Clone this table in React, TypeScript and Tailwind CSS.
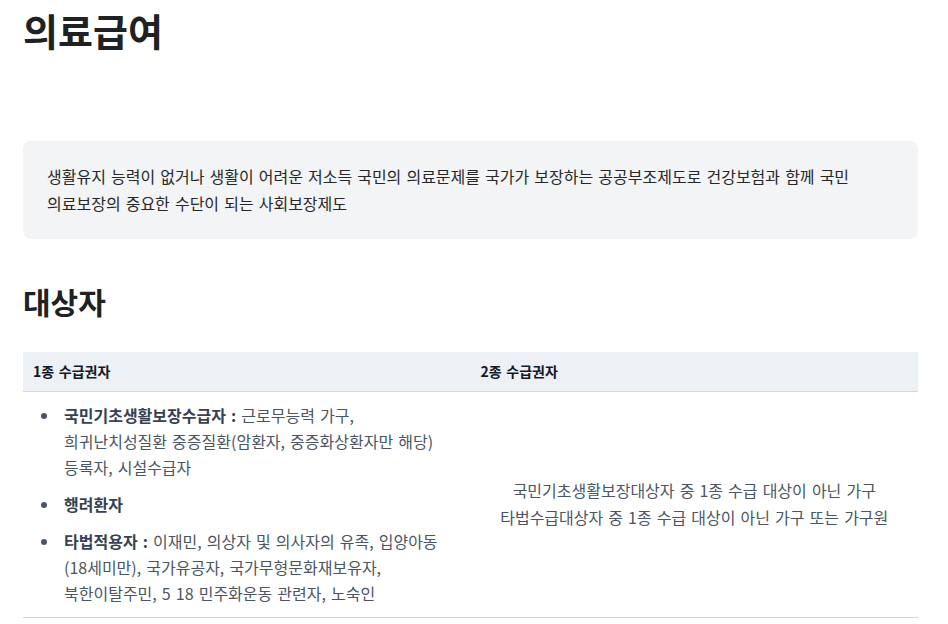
import React from 'react';

const font = { fontFamily: '"Noto Sans CJK KR", "Noto Sans", sans-serif' };

function Bullet({ label, children }: { label: string; children?: React.ReactNode }) {
    return (
        <li className="leading-[26px] pl-[4px]">
            <span className="font-bold text-[#374151]">{label}</span>
            {children && <span> {children}</span>}
        </li>
    );
}

export default function App() {
    return (
        <div className="min-h-screen bg-white pl-[23px] pr-[30px] pt-[3px] text-[#1f2937] [word-spacing:1.5px]" style={font}>
            <h1 className="text-[38px] font-bold leading-[54px] text-[#1f2123]">의료급여</h1>

            <div className="mt-[84px] rounded-lg bg-[#f3f4f6] px-6 py-[22px]">
                <p className="text-[16px] leading-[27px] text-[#27272a] break-keep">
                    생활유지 능력이 없거나 생활이 어려운 저소득 국민의 의료문제를 국가가 보장하는 공공부조제도로 건강보험과 함께 국민
                    <br />
                    의료보장의 중요한 수단이 되는 사회보장제도
                </p>
            </div>

            <h2 className="mt-[40px] text-[30px] font-bold leading-[45px] text-[#1f2123]">대상자</h2>

            <table className="mt-[28px] w-full table-fixed border-collapse">
                <thead>
                    <tr className="bg-[#edf0f5] border-b border-[#d4d6db]">
                        <th className="h-[39px] px-[10px] text-left text-[14px] font-bold text-[#111827]">1종 수급권자</th>
                        <th className="h-[39px] px-[10px] text-left text-[14px] font-bold text-[#111827]">2종 수급권자</th>
                    </tr>
                </thead>
                <tbody>
                    <tr className="border-b border-[#d4d6db]">
                        <td className="px-[10px] pt-[10px] pb-[11px] align-top">
                            <ul className="list-disc pl-[27px] text-[16px] text-[#4b5563] break-keep space-y-[11px] marker:text-[#4b5563]">
                                <Bullet label="국민기초생활보장수급자 :">
                                    근로무능력 가구,
                                    <br />
                                    희귀난치성질환 중증질환(암환자, 중증화상환자만 해당)
                                    <br />
                                    등록자, 시설수급자
                                </Bullet>
                                <Bullet label="행려환자" />
                                <Bullet label="타법적용자 :">
                                    이재민, 의상자 및 의사자의 유족, 입양아동
                                    <br />
                                    (18세미만), 국가유공자, 국가무형문화재보유자,
                                    <br />
                                    북한이탈주민, 5 18 민주화운동 관련자, 노숙인
                                </Bullet>
                            </ul>
                        </td>
                        <td className="px-[10px] text-center align-middle text-[16px] leading-[27px] text-[#4b5563]">
                            국민기초생활보장대상자 중 1종 수급 대상이 아닌 가구
                            <br />
                            타법수급대상자 중 1종 수급 대상이 아닌 가구 또는 가구원
                        </td>
                    </tr>
                </tbody>
            </table>
        </div>
    );
}
